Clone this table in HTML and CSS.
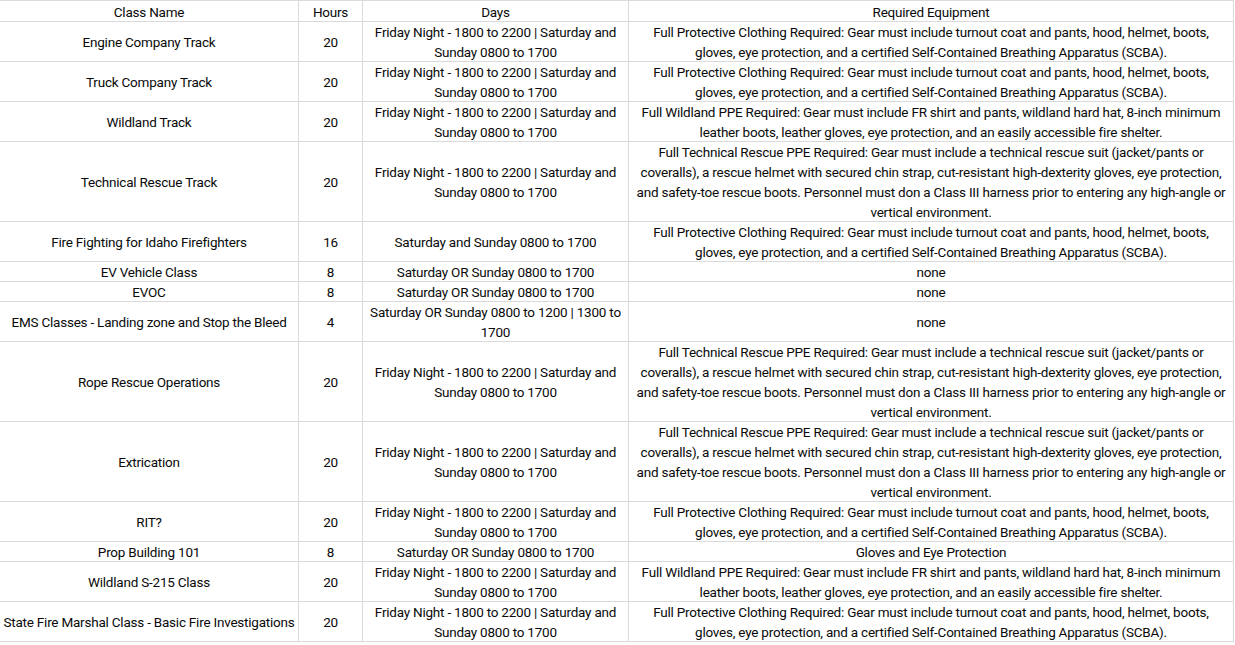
FILE: index.html
```html
<!DOCTYPE html>
<html>
<head>
<meta charset="utf-8">
<link rel="stylesheet" href="styles.css">
</head>
<body>
<div class="sheet">
<div class="row head"><div class="cell">Class Name</div><div class="cell">Hours</div><div class="cell">Days</div><div class="cell">Required Equipment</div></div>
<div class="row h2"><div class="cell">Engine Company Track</div><div class="cell">20</div><div class="cell">Friday Night - 1800 to 2200 | Saturday and<br>Sunday 0800 to 1700</div><div class="cell">Full Protective Clothing Required: Gear must include turnout coat and pants, hood, helmet, boots,<br>gloves, eye protection, and a certified Self-Contained Breathing Apparatus (SCBA).</div></div>
<div class="row h2"><div class="cell">Truck Company Track</div><div class="cell">20</div><div class="cell">Friday Night - 1800 to 2200 | Saturday and<br>Sunday 0800 to 1700</div><div class="cell">Full Protective Clothing Required: Gear must include turnout coat and pants, hood, helmet, boots,<br>gloves, eye protection, and a certified Self-Contained Breathing Apparatus (SCBA).</div></div>
<div class="row h2"><div class="cell">Wildland Track</div><div class="cell">20</div><div class="cell">Friday Night - 1800 to 2200 | Saturday and<br>Sunday 0800 to 1700</div><div class="cell">Full Wildland PPE Required: Gear must include FR shirt and pants, wildland hard hat, 8-inch minimum<br>leather boots, leather gloves, eye protection, and an easily accessible fire shelter.</div></div>
<div class="row h4"><div class="cell">Technical Rescue Track</div><div class="cell">20</div><div class="cell">Friday Night - 1800 to 2200 | Saturday and<br>Sunday 0800 to 1700</div><div class="cell">Full Technical Rescue PPE Required: Gear must include a technical rescue suit (jacket/pants or<br>coveralls), a rescue helmet with secured chin strap, cut-resistant high-dexterity gloves, eye protection,<br>and safety-toe rescue boots. Personnel must don a Class III harness prior to entering any high-angle or<br>vertical environment.</div></div>
<div class="row h2"><div class="cell">Fire Fighting for Idaho Firefighters</div><div class="cell">16</div><div class="cell">Saturday and Sunday 0800 to 1700</div><div class="cell">Full Protective Clothing Required: Gear must include turnout coat and pants, hood, helmet, boots,<br>gloves, eye protection, and a certified Self-Contained Breathing Apparatus (SCBA).</div></div>
<div class="row h1"><div class="cell">EV Vehicle Class</div><div class="cell">8</div><div class="cell">Saturday OR Sunday 0800 to 1700</div><div class="cell">none</div></div>
<div class="row h1"><div class="cell">EVOC</div><div class="cell">8</div><div class="cell">Saturday OR Sunday 0800 to 1700</div><div class="cell">none</div></div>
<div class="row h2"><div class="cell">EMS Classes - Landing zone and Stop the Bleed</div><div class="cell">4</div><div class="cell">Saturday OR Sunday 0800 to 1200 | 1300 to<br>1700</div><div class="cell">none</div></div>
<div class="row h4"><div class="cell">Rope Rescue Operations</div><div class="cell">20</div><div class="cell">Friday Night - 1800 to 2200 | Saturday and<br>Sunday 0800 to 1700</div><div class="cell">Full Technical Rescue PPE Required: Gear must include a technical rescue suit (jacket/pants or<br>coveralls), a rescue helmet with secured chin strap, cut-resistant high-dexterity gloves, eye protection,<br>and safety-toe rescue boots. Personnel must don a Class III harness prior to entering any high-angle or<br>vertical environment.</div></div>
<div class="row h4"><div class="cell">Extrication</div><div class="cell">20</div><div class="cell">Friday Night - 1800 to 2200 | Saturday and<br>Sunday 0800 to 1700</div><div class="cell">Full Technical Rescue PPE Required: Gear must include a technical rescue suit (jacket/pants or<br>coveralls), a rescue helmet with secured chin strap, cut-resistant high-dexterity gloves, eye protection,<br>and safety-toe rescue boots. Personnel must don a Class III harness prior to entering any high-angle or<br>vertical environment.</div></div>
<div class="row h2"><div class="cell">RIT?</div><div class="cell">20</div><div class="cell">Friday Night - 1800 to 2200 | Saturday and<br>Sunday 0800 to 1700</div><div class="cell">Full Protective Clothing Required: Gear must include turnout coat and pants, hood, helmet, boots,<br>gloves, eye protection, and a certified Self-Contained Breathing Apparatus (SCBA).</div></div>
<div class="row h1"><div class="cell">Prop Building 101</div><div class="cell">8</div><div class="cell">Saturday OR Sunday 0800 to 1700</div><div class="cell">Gloves and Eye Protection</div></div>
<div class="row h2"><div class="cell">Wildland S-215 Class</div><div class="cell">20</div><div class="cell">Friday Night - 1800 to 2200 | Saturday and<br>Sunday 0800 to 1700</div><div class="cell">Full Wildland PPE Required: Gear must include FR shirt and pants, wildland hard hat, 8-inch minimum<br>leather boots, leather gloves, eye protection, and an easily accessible fire shelter.</div></div>
<div class="row h2"><div class="cell">State Fire Marshal Class - Basic Fire Investigations</div><div class="cell">20</div><div class="cell">Friday Night - 1800 to 2200 | Saturday and<br>Sunday 0800 to 1700</div><div class="cell">Full Protective Clothing Required: Gear must include turnout coat and pants, hood, helmet, boots,<br>gloves, eye protection, and a certified Self-Contained Breathing Apparatus (SCBA).</div></div>
</div>
</body>
</html>
```

FILE: styles.css
```css
html, body {
  margin: 0;
  padding: 0;
  background: #ffffff;
}
body {
  font-family: Roboto, "Liberation Sans", sans-serif;
  font-size: 13.5px;
  letter-spacing: -0.22px;
  color: #0a0a0a;
}
.sheet {
  width: 1234px;
  display: flex;
  flex-direction: column;
  gap: 1px;
  padding: 1px 1px 1px 0;
  box-sizing: border-box;
  background: #dadada;
}
.row {
  display: grid;
  grid-template-columns: 298px 63px 265px 604px;
  column-gap: 1px;
}
.head { height: 20px; }
.h1 { height: 19px; }
.h2 { height: 39px; }
.h4 { height: 79px; }
.cell {
  background: #ffffff;
  display: flex;
  align-items: center;
  justify-content: center;
  text-align: center;
  white-space: nowrap;
  line-height: 20px;
  padding-top: 1px;
  box-sizing: border-box;
  overflow: hidden;
}
.head .cell { padding-top: 2px; }
```
